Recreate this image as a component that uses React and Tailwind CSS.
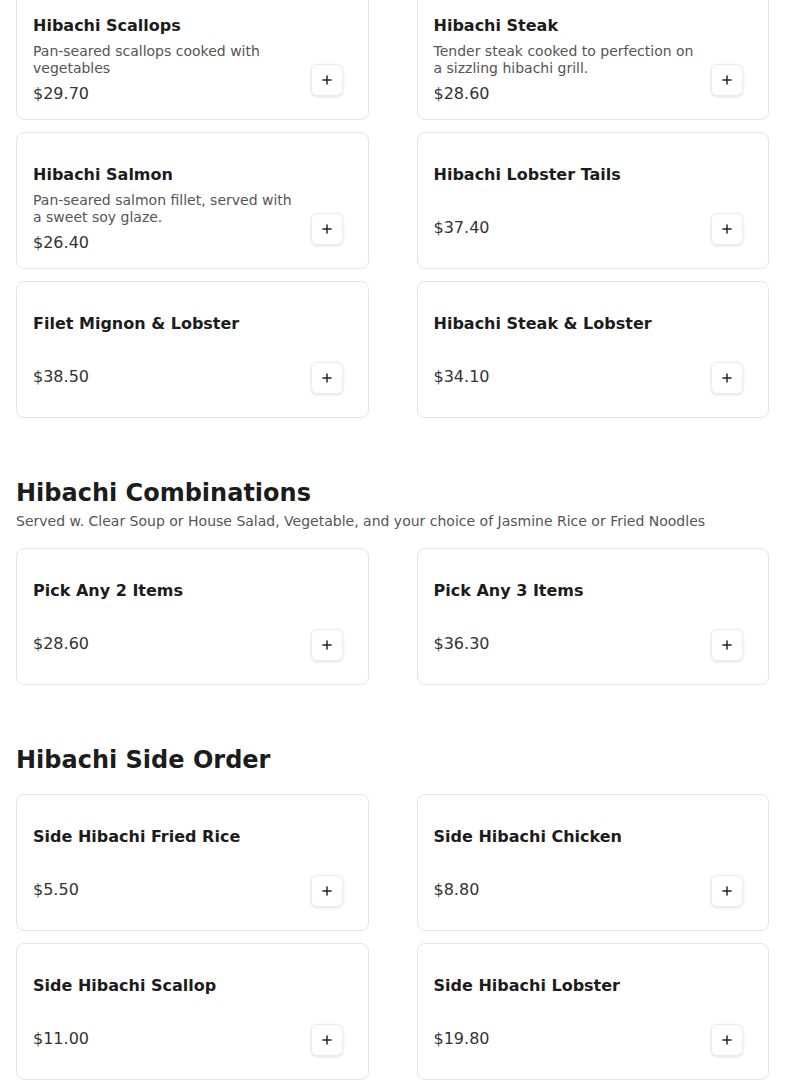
import React from "react";
import { Plus } from "lucide-react";

const sections = [
  {
    title: null,
    items: [
      { name: "Hibachi Scallops", desc: "Pan-seared scallops cooked with vegetables", price: "$29.70" },
      { name: "Hibachi Steak", desc: "Tender steak cooked to perfection on a sizzling hibachi grill.", price: "$28.60" },
      { name: "Hibachi Salmon", desc: "Pan-seared salmon fillet, served with a sweet soy glaze.", price: "$26.40" },
      { name: "Hibachi Lobster Tails", price: "$37.40" },
      { name: "Filet Mignon & Lobster", price: "$38.50" },
      { name: "Hibachi Steak & Lobster", price: "$34.10" },
    ],
  },
  {
    title: "Hibachi Combinations",
    subtitle: "Served w. Clear Soup or House Salad, Vegetable, and your choice of Jasmine Rice or Fried Noodles",
    items: [
      { name: "Pick Any 2 Items", price: "$28.60" },
      { name: "Pick Any 3 Items", price: "$36.30" },
    ],
  },
  {
    title: "Hibachi Side Order",
    items: [
      { name: "Side Hibachi Fried Rice", price: "$5.50" },
      { name: "Side Hibachi Chicken", price: "$8.80" },
      { name: "Side Hibachi Scallop", price: "$11.00" },
      { name: "Side Hibachi Lobster", price: "$19.80" },
    ],
  },
];

function Card({ item }) {
  return (
    <div className="flex h-[137px] gap-3 rounded-lg border border-[#e5e5e5] bg-white px-4 pt-[30px] pb-4">
      <div className="flex min-w-0 flex-1 flex-col">
        <h3 className="text-base font-bold leading-6 text-[#1c1c1c]">{item.name}</h3>
        {item.desc ? (
          <>
            <p className="mt-[5px] text-sm leading-[17px] text-[#555555]">{item.desc}</p>
            <p className="mt-[5px] text-base leading-6 text-[#333333]">{item.price}</p>
          </>
        ) : (
          <p className="mt-[29px] text-base leading-6 text-[#333333]">{item.price}</p>
        )}
      </div>
      <button className="mr-[9px] mb-[7px] flex h-8 w-8 shrink-0 items-center justify-center self-end rounded-md border border-[#ececec] bg-white text-[#222222] shadow-[0_1px_3px_rgba(0,0,0,0.12)]">
        <Plus size={14} strokeWidth={2.5} />
      </button>
    </div>
  );
}

export default function App() {
  return (
    <div
      className="min-h-[1091px] bg-white px-4"
      style={{ fontFamily: '"DejaVu Sans", "Liberation Sans", sans-serif' }}
    >
      <div className="mt-[-17px]">
        {sections.map((s, i) => (
          <section key={i} className={i === 0 ? "" : "mt-[59px]"}>
            {s.title && (
              <h2 className={`text-2xl font-bold leading-8 text-[#1c1c1c] ${s.subtitle ? "" : "mb-[18px]"}`}>
                {s.title}
              </h2>
            )}
            {s.subtitle && (
              <p className="mt-[2px] mb-[17px] text-sm leading-5 text-[#555555]">{s.subtitle}</p>
            )}
            <div className="grid grid-cols-2 gap-x-12 gap-y-3">
              {s.items.map((it) => (
                <Card key={it.name} item={it} />
              ))}
            </div>
          </section>
        ))}
      </div>
    </div>
  );
}
